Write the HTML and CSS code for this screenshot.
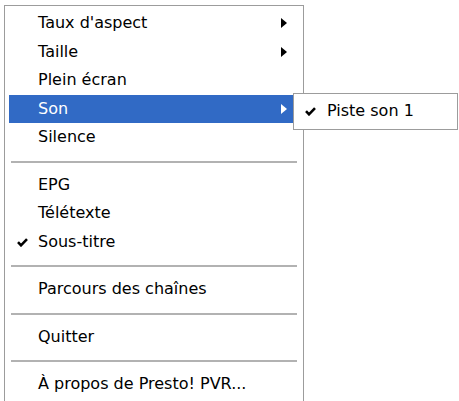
FILE: index.html
```html
<!DOCTYPE html>
<html lang="fr">
<head>
<meta charset="utf-8">
<title>Menu</title>
<link rel="stylesheet" href="styles.css">
</head>
<body>
<div class="menu">
  <div class="item"><span class="label">Taux d'aspect</span><span class="arrow"></span></div>
  <div class="item"><span class="label">Taille</span><span class="arrow"></span></div>
  <div class="item"><span class="label">Plein écran</span></div>
  <div class="item active"><span class="label">Son</span><span class="arrow"></span></div>
  <div class="item"><span class="label">Silence</span></div>
  <div class="sep"></div>
  <div class="item"><span class="label">EPG</span></div>
  <div class="item"><span class="label">Télétexte</span></div>
  <div class="item"><svg class="check" viewBox="0 0 11 9" width="11" height="9"><path d="M1 4.2 L4 7.3 L10 1.2" fill="none" stroke="#000" stroke-width="2.6"/></svg><span class="label">Sous-titre</span></div>
  <div class="sep"></div>
  <div class="item"><span class="label">Parcours des chaînes</span></div>
  <div class="sep"></div>
  <div class="item"><span class="label">Quitter</span></div>
  <div class="sep"></div>
  <div class="item"><span class="label">À propos de Presto! PVR...</span></div>

  <div class="menu submenu">
    <div class="item"><svg class="check" viewBox="0 0 11 9" width="11" height="9"><path d="M1 4.2 L4 7.3 L10 1.2" fill="none" stroke="#000" stroke-width="2.6"/></svg><span class="label">Piste son 1</span></div>
  </div>
</div>
</body>
</html>
```

FILE: styles.css
```css
html, body {
  margin: 0;
  padding: 0;
  background: #ffffff;
}

body {
  font-family: "DejaVu Sans", "Liberation Sans", sans-serif;
  font-size: 16px;
  color: #000;
}

.menu {
  position: relative;
  box-sizing: border-box;
  width: 300px;
  margin: 5px 0 0 4px;
  padding: 3px 4px 2px;
  background: #ffffff;
  border: 1px solid #9c9c9c;
  display: flex;
  flex-direction: column;
}

.item {
  position: relative;
  height: 28.5px;
  display: flex;
  align-items: center;
  padding-left: 29px;
  padding-right: 12px;
  white-space: nowrap;
}

.label {
  flex: 1;
  line-height: 1;
}

.check {
  position: absolute;
  left: 8px;
  top: 10px;
}

.arrow {
  width: 0;
  height: 0;
  border-left: 6px solid #000;
  border-top: 5px solid transparent;
  border-bottom: 5px solid transparent;
}

.item.active {
  background: #316ac5;
  color: #ffffff;
}

.item.active .arrow {
  border-left-color: #ffffff;
}

.sep {
  height: 2px;
  margin: 9px 2px 8px;
  background: #b2b2b2;
}

.submenu {
  position: absolute;
  left: 288px;
  top: 87px;
  width: 165px;
  margin: 0;
  padding: 3px 4px;
}

.submenu .check {
  left: 7px;
}
```
